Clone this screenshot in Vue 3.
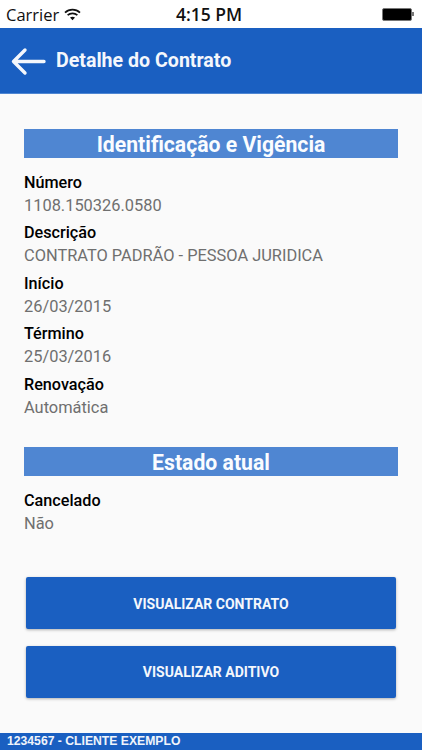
<script setup>
const blocks = [
  {
    title: 'Identificação e Vigência',
    items: [
      ['Número', '1108.150326.0580'],
      ['Descrição', 'CONTRATO PADRÃO - PESSOA JURIDICA'],
      ['Início', '26/03/2015'],
      ['Término', '25/03/2016'],
      ['Renovação', 'Automática'],
    ],
  },
  { title: 'Estado atual', items: [['Cancelado', 'Não']] },
]
</script>

<template>
  <div class="page">
    <div class="status">
      <div class="status-left">
        <span class="carrier">Carrier</span>
        <svg class="wifi" width="17" height="13" viewBox="0 0 17 13">
          <path d="M1 4.6C5.2.7 11.8.7 16 4.6" fill="none" stroke="#111" stroke-width="1.7" />
          <path d="M3.6 7.2c2.8-2.5 7-2.5 9.8 0" fill="none" stroke="#111" stroke-width="1.7" />
          <path d="M6 9.6c1.4-1.2 3.6-1.2 5 0l-2.5 2.7z" fill="#111" />
        </svg>
      </div>
      <span class="time">4:15 PM</span>
      <div class="battery"><span class="cell"></span><span class="tip"></span></div>
    </div>
    <header class="bar">
      <svg class="back" width="36" height="30" viewBox="0 0 36 30">
        <path d="M34 15.5H3.5M15 4 3.5 15.5 15 27" fill="none" stroke="#f4f7fc" stroke-width="3.4" stroke-linecap="round" stroke-linejoin="round" />
      </svg>
      <h1>Detalhe do Contrato</h1>
    </header>
    <main class="content">
      <section v-for="b in blocks" :key="b.title" class="block">
        <h2>{{ b.title }}</h2>
        <div class="items">
          <div v-for="it in b.items" :key="it[0]" class="item">
            <div class="label">{{ it[0] }}</div>
            <div class="value">{{ it[1] }}</div>
          </div>
        </div>
      </section>
      <div class="actions">
        <button>VISUALIZAR CONTRATO</button>
        <button>VISUALIZAR ADITIVO</button>
      </div>
    </main>
    <footer class="foot">1234567 - CLIENTE EXEMPLO</footer>
  </div>
</template>

<style>
html, body { margin: 0; background: #fafafa; }
</style>

<style scoped>
.page {
  width: 422px;
  height: 750px;
  display: flex;
  flex-direction: column;
  overflow: hidden;
  background: #fafafa;
  font-family: Roboto, sans-serif;
}
.status {
  height: 28px;
  flex: none;
  background: #fff;
  display: flex;
  align-items: center;
  justify-content: space-between;
  padding: 0 8px 0 6px;
  position: relative;
  color: #111;
  font-family: "Open Sans", sans-serif;
}
.status-left { display: flex; align-items: center; gap: 5px; }
.carrier { font-size: 16.5px; }
.time {
  position: absolute;
  left: 176px;
  top: 2px;
  font-size: 17.5px;
  font-weight: 600;
}
.battery { display: flex; align-items: center; }
.cell { width: 28px; height: 11px; background: #000; border: 1px solid #777; border-radius: 2px; }
.tip { width: 2px; height: 4px; background: #777; }
.bar {
  flex: none;
  background: #1a5fc1;
  border-bottom: 1px solid #4f86d2;
  display: flex;
  align-items: center;
  gap: 10px;
  padding-left: 10px;
  box-sizing: border-box;
  height: 66px;
}
.back { flex: none; }
h1 { margin: 0; color: #f4f7fc; font-size: 19.6px; font-weight: 700; }
.content {
  flex: 1;
  padding: 35px 24px 0;
  display: flex;
  flex-direction: column;
}
.block + .block { margin-top: 23px; }
h2 {
  margin: 0 0 14px;
  height: 29px;
  line-height: 31px;
  background: #4f86d2;
  color: #fafcff;
  text-align: center;
  font-size: 21.2px;
  font-weight: 700;
}
.items { display: flex; flex-direction: column; }
.item { height: 50.4px; }
.label { font-size: 16.2px; font-weight: 500; color: #000; line-height: 22px; }
.value { font-size: 16.4px; color: #6f6f6f; line-height: 23px; }
.actions {
  margin: 37px 2px 0;
  display: flex;
  flex-direction: column;
  gap: 16.5px;
}
button {
  height: 52px;
  border: 0;
  padding: 1px 0 0;
  border-radius: 2px;
  background: #1a5fc1;
  color: #f4f7fc;
  font-family: Roboto, sans-serif;
  font-size: 14px;
  font-weight: 700;
  box-shadow: 0 1px 3px rgba(0, 0, 0, 0.3);
}
.foot {
  height: 17px;
  flex: none;
  background: #1a5fc1;
  color: #f0f4fb;
  font-family: "Liberation Sans", sans-serif;
  font-size: 12.2px;
  font-weight: 700;
  line-height: 17px;
  padding-left: 7px;
}
</style>
